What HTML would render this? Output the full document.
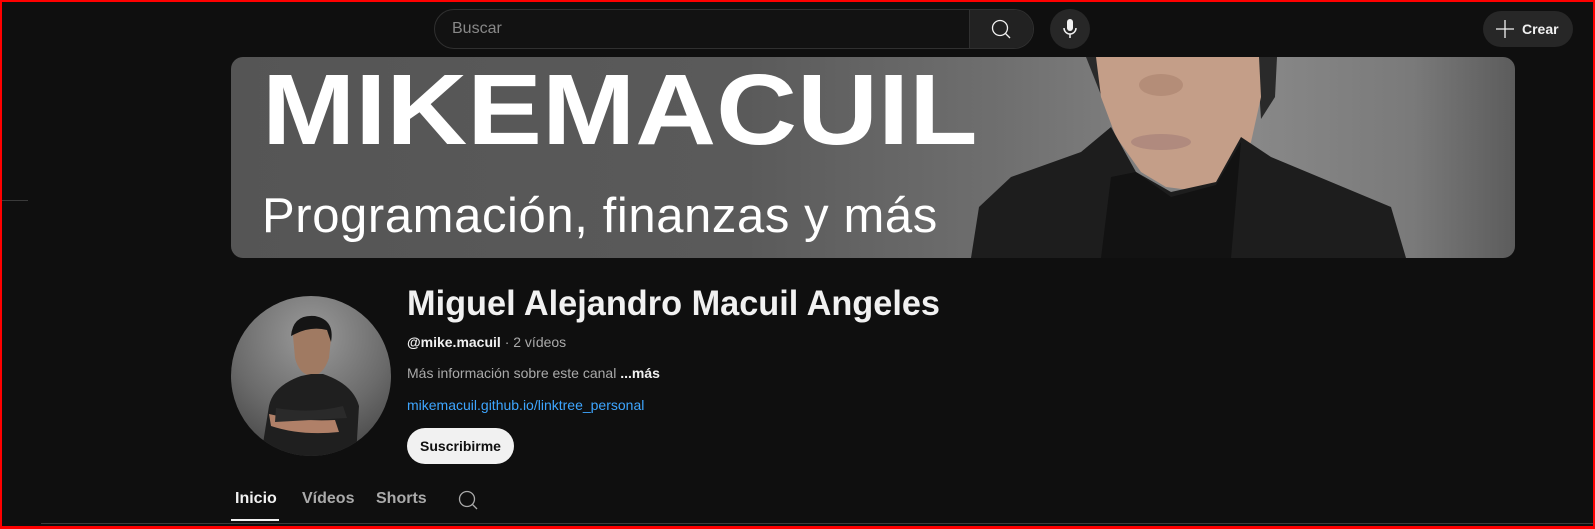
<!DOCTYPE html>
<html><head><meta charset="utf-8"><style>
*{margin:0;padding:0;box-sizing:border-box}
html,body{width:1595px;height:529px;overflow:hidden;background:#0f0f0f;font-family:"Liberation Sans",Arial,sans-serif;color:#f1f1f1}
.frame{position:absolute;left:0;top:0;width:1595px;height:529px;border:2px solid #f00;border-bottom-width:3px;z-index:10;pointer-events:none}
.abs{position:absolute}
.search{left:434px;top:9px;width:600px;height:40px;border:1px solid #303030;border-radius:20px;background:#121212;overflow:hidden}
.search .ph{position:absolute;left:17px;top:10px;font-size:16px;color:#888}
.search .btn{position:absolute;right:0;top:0;width:64px;height:40px;background:#222;border-left:1px solid #303030}
.mic{left:1050px;top:9px;width:40px;height:40px;border-radius:50%;background:#272727}
.crear{left:1483px;top:11px;width:90px;height:36px;border-radius:18px;background:#272727}
.banner{left:231px;top:57px;width:1284px;height:201px;border-radius:12px;overflow:hidden;background:linear-gradient(90deg,#555 0%,#5a5a5a 40%,#6f6f6f 60%,#8a8a8a 78%,#7a7a7a 92%,#5c5c5c 100%)}
.t1{position:absolute;left:31px;top:3px;font-size:100px;line-height:1;font-weight:bold;color:#fff;white-space:nowrap;transform:scaleX(1.12);transform-origin:left}
.t2{position:absolute;left:31px;top:131px;font-size:49px;color:#fff;white-space:nowrap;letter-spacing:0.6px}
.name{left:407px;top:284px;font-size:35px;font-weight:bold;white-space:nowrap;transform:scaleX(0.98);transform-origin:left}
.sm{font-size:14px;white-space:nowrap}
.sub{left:407px;top:428px;width:107px;height:36px;border-radius:18px;background:#f1f1f1;color:#0f0f0f;font-size:14px;font-weight:bold;text-align:center;line-height:36px}
.tab{top:490px;font-size:16px;font-weight:bold;color:#aaa}
</style></head><body>
<div class="frame"></div>
<div class="abs" style="left:0;top:200px;width:28px;height:1px;background:#3a3a3a"></div>
<div class="abs search"><span class="ph">Buscar</span><div class="btn">
<svg width="64" height="40" viewBox="0 0 64 40"><circle cx="30" cy="18" r="7.5" fill="none" stroke="#f1f1f1" stroke-width="1.3"/><line x1="35.5" y1="23.5" x2="40" y2="28" stroke="#f1f1f1" stroke-width="1.3"/></svg></div></div>
<div class="abs mic"><svg width="40" height="40" viewBox="0 0 40 40"><rect x="17" y="10" width="6" height="12" rx="3" fill="#f1f1f1"/><path d="M14 19a6 6 0 0 0 12 0" fill="none" stroke="#f1f1f1" stroke-width="1.5"/><line x1="20" y1="25" x2="20" y2="29" stroke="#f1f1f1" stroke-width="1.5"/></svg></div>
<div class="abs crear"><svg class="abs" style="left:10px;top:6px" width="24" height="24" viewBox="0 0 24 24"><path d="M12 3v18M3 12h18" stroke="#f1f1f1" stroke-width="1.3"/></svg><span class="abs" style="left:39px;top:10px;font-size:14px;font-weight:bold">Crear</span></div>
<div class="abs banner">
<svg class="abs" style="left:0;top:0" width="1284" height="201" viewBox="0 0 1284 201">
<path d="M855 0 L866 0 L870 38 Z" fill="#2a2a2a"/>
<path d="M1026 0 L1046 0 L1044 40 L1030 62 Z" fill="#2a2a2a"/>
<path d="M865 0 L870 40 L885 80 L910 115 L935 130 L975 135 L1000 120 L1020 85 L1030 40 L1028 0 Z" fill="#c49e88"/>
<ellipse cx="930" cy="28" rx="22" ry="11" fill="#b48d78"/>
<ellipse cx="930" cy="85" rx="30" ry="8" fill="#b08a7e"/>
<path d="M740 201 L748 150 L780 120 L850 95 L880 70 L905 115 L940 135 L985 125 L1010 80 L1040 100 L1100 125 L1160 150 L1175 201 Z" fill="#1d1d1d"/>
<path d="M870 201 L880 120 L905 115 L940 140 L985 128 L1010 85 L1000 201 Z" fill="#121212"/>
</svg>
<div class="t1">MIKEMACUIL</div>
<div class="t2">Programación, finanzas y más</div>
</div>
<div class="abs" style="left:231px;top:296px;width:160px;height:160px;border-radius:50%;overflow:hidden;background:radial-gradient(circle at 50% 25%,#9a9a9a,#6a6a6a 55%,#3a3a3a 100%)">
<svg width="160" height="160" viewBox="0 0 160 160"><path d="M62 40 Q65 22 82 22 Q100 24 100 42 L98 62 Q92 80 80 80 Q68 78 64 62 Z" fill="#a07a62"/><path d="M60 40 Q62 18 84 20 Q104 24 100 46 L96 34 Q80 30 64 38 Z" fill="#151515"/><path d="M30 160 L38 110 Q42 90 70 80 L80 78 L92 78 Q122 88 128 110 L125 160 Z" fill="#1f1f1f"/><path d="M38 118 Q70 126 104 124 L108 136 Q70 140 40 130 Z" fill="#b08068"/><path d="M45 112 Q80 118 112 110 L116 122 L44 126 Z" fill="#2a2a2a"/></svg></div>
<div class="abs name">Miguel Alejandro Macuil Angeles</div>
<div class="abs sm" style="left:407px;top:334px"><b style="color:#f1f1f1">@mike.macuil</b><span style="color:#aaa"> · 2 vídeos</span></div>
<div class="abs sm" style="left:407px;top:365px;color:#aaa">Más información sobre este canal <b style="color:#f1f1f1">...más</b></div>
<div class="abs sm" style="left:407px;top:397px;color:#3ea6ff">mikemacuil.github.io/linktree_personal</div>
<div class="abs sub">Suscribirme</div>
<div class="abs tab" style="left:235px;color:#f1f1f1">Inicio</div>
<div class="abs tab" style="left:302px">Vídeos</div>
<div class="abs tab" style="left:376px">Shorts</div>
<svg class="abs" style="left:455px;top:487px" width="26" height="26" viewBox="0 0 26 26"><circle cx="12" cy="12" r="7.5" fill="none" stroke="#aaa" stroke-width="1.3"/><line x1="17.5" y1="17.5" x2="22" y2="22" stroke="#aaa" stroke-width="1.3"/></svg>
<div class="abs" style="left:231px;top:519px;width:48px;height:2px;background:#f1f1f1"></div>
<div class="abs" style="left:41px;top:523px;width:1554px;height:1px;background:#3d3d3d"></div>
</body></html>
